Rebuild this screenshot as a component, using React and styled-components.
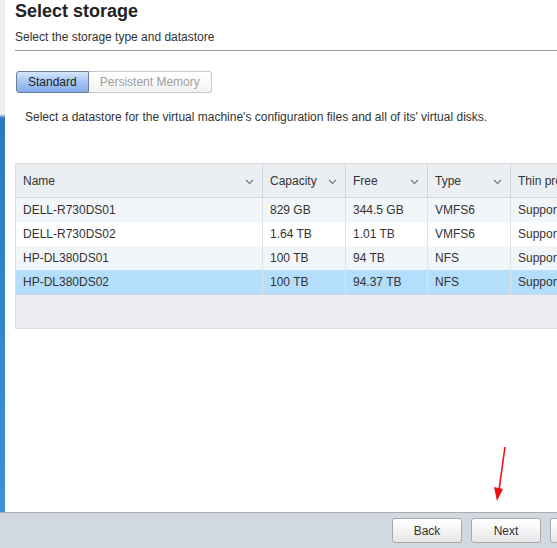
import React from 'react';
import styled, { createGlobalStyle } from 'styled-components';

const GlobalStyle = createGlobalStyle`
  html, body { margin: 0; padding: 0; }
  body {
    width: 557px;
    height: 548px;
    overflow: hidden;
    font-family: "Liberation Sans", Arial, sans-serif;
    background: #fff;
  }
`;

const Page = styled.div`
  position: relative;
  width: 557px;
  height: 548px;
  display: flex;
  flex-direction: column;
  overflow: hidden;
`;

const Body = styled.div`
  display: flex;
  height: 512px;
`;

const Strip = styled.div`
  width: 5px;
  flex: none;
  background: linear-gradient(to bottom, #eeeff1 0, #eeeff1 114px, #2c79c2 118px, #3384ca 300px, #3f90d3 100%);
`;

const Content = styled.div`
  flex: 1;
  min-width: 0;
  padding-left: 10px;
  overflow: hidden;
`;

const Title = styled.h1`
  margin: 0;
  padding-top: 1px;
  font-size: 18px;
  line-height: 20px;
  font-weight: bold;
  color: #222;
`;

const Subtitle = styled.div`
  margin-top: 9px;
  font-size: 12px;
  line-height: 14px;
  color: #333;
  padding-bottom: 6px;
  border-bottom: 1px solid #999;
`;

const Tabs = styled.div`
  display: flex;
  margin-top: 20px;
  margin-left: 1px;
`;

const Tab = styled.div`
  height: 20px;
  padding: 0 11px;
  display: flex;
  align-items: center;
  font-size: 12px;
  border: 1px solid ${p => (p.$active ? '#6d7f96' : '#c9c9c9')};
  color: ${p => (p.$active ? '#222' : '#a0a0a0')};
  background: ${p =>
    p.$active
      ? 'linear-gradient(to bottom, #d6e6fb 0%, #a9c8f4 45%, #85abec 100%)'
      : 'linear-gradient(to bottom, #ffffff 0%, #f3f3f3 100%)'};
  border-radius: ${p => (p.$first ? '3px 0 0 3px' : '0 3px 3px 0')};
  ${p => (p.$first ? '' : 'border-left: none;')}
`;

const Description = styled.p`
  margin: 17px 0 0 10px;
  font-size: 12px;
  line-height: 14px;
  color: #333;
`;

const Table = styled.div`
  margin-top: 39px;
  width: 620px;
  border: 1px solid #dcdfe2;
  border-right: none;
  font-size: 12px;
  color: #333;
`;

const Row = styled.div`
  display: grid;
  grid-template-columns: 246px 83px 82px 83px 1fr;
  height: ${p => (p.$header ? '33px' : '24px')};
  background: ${p => p.$bg};
  border-bottom: ${p => (p.$header ? '1px solid #d4d8dc' : 'none')};
`;

const Cell = styled.div`
  display: flex;
  align-items: center;
  justify-content: space-between;
  padding: 0 8px 0 7px;
  white-space: nowrap;
  overflow: hidden;
  border-left: ${p => (p.$first ? 'none' : `1px solid ${p.$header ? '#d0d4d8' : '#e1e4e7'}`)};
`;

const Chevron = styled.svg`
  flex: none;
  width: 9px;
  height: 6px;
  margin-top: 2px;
`;

const EmptyArea = styled.div`
  height: 33px;
  background: #eceef1;
  border-top: 1px solid #d4d8dc;
`;

const Footer = styled.div`
  flex: 1;
  display: flex;
  align-items: center;
  gap: 9px;
  padding-left: 392px;
  background: #d1d8e0;
  border-top: 1px solid #a7abb0;
`;

const Button = styled.button`
  flex: none;
  width: 70px;
  height: 25px;
  font-family: inherit;
  font-size: 12px;
  color: #333;
  border: 1px solid #a9a9a9;
  border-radius: 3px;
  background: linear-gradient(to bottom, #ffffff 0%, #f4f4f4 50%, #e6e6e6 100%);
  padding: 0;
`;

const Arrow = styled.svg`
  position: absolute;
  left: 490px;
  top: 444px;
  width: 22px;
  height: 62px;
  pointer-events: none;
`;

const SortIcon = () => (
  <Chevron viewBox="0 0 9 6">
    <path d="M1 1 L4.5 4.5 L8 1" fill="none" stroke="#777" strokeWidth="1.1" />
  </Chevron>
);

const columns = ['Name', 'Capacity', 'Free', 'Type', 'Thin provisioning'];

const rows = [
  ['DELL-R730DS01', '829 GB', '344.5 GB', 'VMFS6', 'Supported'],
  ['DELL-R730DS02', '1.64 TB', '1.01 TB', 'VMFS6', 'Supported'],
  ['HP-DL380DS01', '100 TB', '94 TB', 'NFS', 'Supported'],
  ['HP-DL380DS02', '100 TB', '94.37 TB', 'NFS', 'Supported'],
];

function App() {
  const rowColor = i => {
    if (i === 3) return '#b4defc';
    return i % 2 === 0 ? '#f3f6f9' : '#ffffff';
  };

  return (
    <>
      <GlobalStyle />
      <Page>
        <Body>
          <Strip />
          <Content>
            <Title>Select storage</Title>
            <Subtitle>Select the storage type and datastore</Subtitle>
            <Tabs>
              <Tab $active $first>Standard</Tab>
              <Tab>Persistent Memory</Tab>
            </Tabs>
            <Description>
              Select a datastore for the virtual machine's configuration files and all of its' virtual disks.
            </Description>
            <Table>
              <Row $header $bg="#eceff2">
                {columns.map((c, i) => (
                  <Cell key={c} $header $first={i === 0}>
                    <span>{c}</span>
                    {i < 4 && <SortIcon />}
                  </Cell>
                ))}
              </Row>
              {rows.map((r, i) => (
                <Row key={r[0]} $bg={rowColor(i)}>
                  {r.map((v, j) => (
                    <Cell key={j} $first={j === 0}>{v}</Cell>
                  ))}
                </Row>
              ))}
              <EmptyArea />
            </Table>
          </Content>
        </Body>
        <Footer>
          <Button>Back</Button>
          <Button>Next</Button>
          <Button>Finish</Button>
        </Footer>
        <Arrow viewBox="0 0 22 62">
          <line x1="15" y1="3" x2="9" y2="46" stroke="#f01010" strokeWidth="1.6" />
          <polygon points="4,43 13,45 7,57" fill="#f01010" />
        </Arrow>
      </Page>
    </>
  );
}

export default App;
